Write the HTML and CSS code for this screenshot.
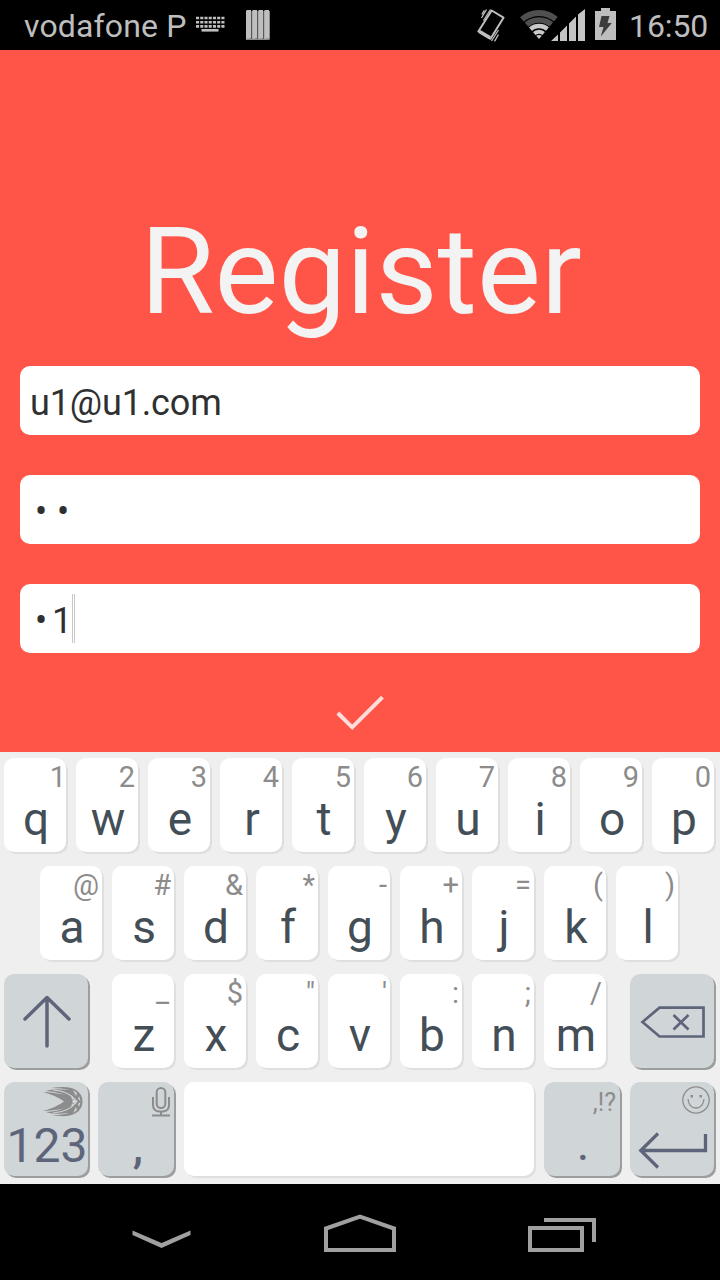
FILE: index.html
```
<!DOCTYPE html>
<html lang="en">
<head>
<meta charset="utf-8">
<title>Register</title>
<link rel="stylesheet" href="styles.css">
</head>
<body>
<div class="screen">
  <header class="status">
    <span class="carrier">vodafone P</span>
    <svg class="status-keyboard" width="30" height="18" viewBox="0 0 30 18">
      <path d="M0 2h28.500M0 6.200h28.500M0 10.400h28.500" stroke="#bebebe" stroke-width="2.600" stroke-dasharray="3.100 1.130" fill="none"/>
      <path d="M5.500 14.300h17" stroke="#bebebe" stroke-width="2.600"/>
    </svg>
    <svg class="status-bars" width="24" height="30" viewBox="0 0 24 30">
      <path fill="#8a8a8a" d="M0 30V1h24v28l-1 1z"/>
      <path fill="#bebebe" d="M0 29V1l1-1h4v28zM6 29V1l1-1h4v28zM12 29V1l1-1h4v28zM18 29V1l1-1h4v28z"/>
      <path stroke="#333" stroke-width=".7" d="M5.700 1v28M11.700 1v28M17.700 1v28"/>
    </svg>
    <svg class="status-icons" width="140" height="34" viewBox="476 8 140 34">
      <g fill="none" stroke="#bebebe" stroke-linejoin="round">
        <path stroke-width="2" d="M491.700 10.500L503.500 17.700L490.500 38.800L478.300 31.500Z"/>
        <path stroke-width="3.500" d="M479.500 31.500L490 37.800"/>
        <path stroke-width="1.300" d="M481.500 18l5-8.500M483.500 20.500l7-11M481.800 14.500l2.500-4.200M498.500 30l-7 11M498.500 34.500l-4 6.800M495.500 31l-2 3"/>
      </g>
      <clipPath id="wedge"><path d="M539 39L519 16Q539 0 558.500 16Z"/></clipPath>
      <g clip-path="url(#wedge)" fill="none">
        <circle cx="539" cy="39" r="26" stroke="#505050" stroke-width="6"/>
        <circle cx="539" cy="39" r="19" stroke="#505050" stroke-width="5.500"/>
        <circle cx="539" cy="39" r="13" stroke="#c8c8c8" stroke-width="4.600"/>
        <circle cx="539" cy="39" r="7.300" stroke="#c8c8c8" stroke-width="4"/>
        <circle cx="539" cy="39" r="4" fill="#c8c8c8"/>
      </g>
      <path fill="#c4c4c4" d="M551 41L558 34.500V41ZM560 41V32.500L567 25.500V41ZM569 41V23.500L576 16.500V41ZM578 41V14.500L585 9V41Z"/>
      <path fill="#bebebe" d="M601 8h9v3h6v29h-21V11h6z"/>
      <path fill="#3c3c3c" d="M601.500 16h8l-2 7h4.300l-11 13.500l2.700-9.500h-4.500z"/>
    </svg>
    <span class="clock">16:50</span>
  </header>

  <main class="form">
    <h1 class="title">Register</h1>
    <div class="field">u1@u1.com</div>
    <div class="field"><span class="bullet">•</span><span class="bullet">•</span></div>
    <div class="field"><span class="bullet">•</span><span class="last">1</span><i class="caret"></i></div>
    <svg class="check" width="50" height="36" viewBox="0 0 50 36"><path d="M2.800 18L17.200 32.300L47.500 2.200" fill="none" stroke="#ffddda" stroke-width="4"/></svg>
  </main>

  <section class="keyboard">
    <div class="row">
      <div class="key one"><small>1</small><b>q</b></div>
      <div class="key"><small>2</small><b>w</b></div>
      <div class="key"><small>3</small><b>e</b></div>
      <div class="key"><small>4</small><b>r</b></div>
      <div class="key"><small>5</small><b>t</b></div>
      <div class="key"><small>6</small><b>y</b></div>
      <div class="key"><small>7</small><b>u</b></div>
      <div class="key"><small>8</small><b>i</b></div>
      <div class="key"><small>9</small><b>o</b></div>
      <div class="key"><small>0</small><b>p</b></div>
    </div>
    <div class="row row-home">
      <div class="key"><small>@</small><b>a</b></div>
      <div class="key"><small>#</small><b>s</b></div>
      <div class="key"><small>&amp;</small><b>d</b></div>
      <div class="key"><small>*</small><b>f</b></div>
      <div class="key"><small>-</small><b>g</b></div>
      <div class="key"><small>+</small><b>h</b></div>
      <div class="key"><small>=</small><b>j</b></div>
      <div class="key"><small>(</small><b>k</b></div>
      <div class="key"><small>)</small><b>l</b></div>
    </div>
    <div class="row">
      <div class="key gray wide shift">
        <svg width="84" height="94" viewBox="0 0 84 94"><path d="M43 72V24M21 45L43 23.500L65 45" fill="none" stroke="#5e657b" stroke-width="3.500" stroke-linecap="round" stroke-linejoin="round"/></svg>
      </div>
      <div class="key underscore"><small>_</small><b>z</b></div>
      <div class="key"><small>$</small><b>x</b></div>
      <div class="key"><small>"</small><b>c</b></div>
      <div class="key"><small>'</small><b>v</b></div>
      <div class="key"><small>:</small><b>b</b></div>
      <div class="key"><small>;</small><b>n</b></div>
      <div class="key slash"><small>/</small><b>m</b></div>
      <div class="key gray wide delete">
        <svg width="84" height="94" viewBox="0 0 84 94"><path d="M12.500 48L29.500 33.700H73.500V62.500H29.500ZM43.500 41L58.500 55.500M58.500 41L43.500 55.500" fill="none" stroke="#5e657b" stroke-width="2.700"/></svg>
      </div>
    </div>
    <div class="row">
      <div class="key gray wide numbers">
        <small><svg width="40" height="31" viewBox="0 0 40 31">
          <path fill="#8c8c8c" d="M8 2Q26 -1 33 4Q39.500 8 39.500 15.500Q39.500 23 33 27Q26 32 8 29Q20 29 26 27Q10 29 3 26Q14 25.500 23 21.500Q17 24 0 25Q13 21.500 21 15.500Q13 9.500 0 6Q17 7 23 9.500Q14 5.500 3 5Q10 2 26 4Q20 2 8 2Z"/>
          <path fill="none" stroke="#d0d5d8" stroke-width="1.100" d="M10 4Q26 5 34 15.500Q26 26 10 27"/>
          <path fill="#d0d5d8" d="M30 4l4 3-1 3zM36 10l1.500 5-2.500-2zM28 9l3 3-2 2zM34 15.500l-2.500-3-2.500 3 2.500 3zM30 27l4-3-1-3zM36 21l1.500-5-2.500 2zM28 22l3-3-2-2z"/>
        </svg></small><b>123</b>
      </div>
      <div class="key gray medium comma">
        <small><svg width="18" height="30" viewBox="0 0 18 30"><g fill="none" stroke="#8c8c8c" stroke-width="2"><rect x="4.700" y="1" width="8.600" height="20" rx="4.300"/><path d="M1 10v8Q1 24 7 24.500h4Q17 24 17 18v-8M9 24.500V28M0 28.500h18"/></g></svg></small><b>,</b>
      </div>
      <div class="key space"></div>
      <div class="key gray medium period"><small>,!?</small><b>.</b></div>
      <div class="key gray wide enter">
        <svg width="84" height="94" viewBox="0 0 84 94"><g fill="none" stroke="#8c8c8c" stroke-width="1.300"><circle cx="66" cy="18" r="13.200"/><path d="M58 17Q59 26 66 26Q73 26 74 17"/></g><path fill="#8c8c8c" d="M60.500 13h2.500v2.500h-2.500zM69.500 13h2.500v2.500h-2.500z"/><path d="M75.500 52V68.500H11M28 51.500L10.800 68.500L28 85.500" fill="none" stroke="#5e657b" stroke-width="3.300"/></svg>
      </div>
    </div>
  </section>

  <nav class="nav">
    <svg width="60" height="40" viewBox="0 0 60 40"><path fill="#a0a0a0" d="M.5 16.500L29.500 29L58.500 16.500V21L29.500 34L.5 21Z"/></svg>
    <svg width="72" height="40" viewBox="0 0 72 40"><path d="M2 14.500L36 2.500L70 14.500V36H2Z" fill="none" stroke="#a0a0a0" stroke-width="4"/></svg>
    <svg width="68" height="40" viewBox="0 0 68 40"><path d="M2 14H54V36H2ZM16 6H66V28" fill="none" stroke="#a0a0a0" stroke-width="4"/></svg>
  </nav>
</div>
</body>
</html>
```
FILE: styles.css
```
* { box-sizing: border-box; }
body { margin: 0; background: #000; font-family: Roboto, "Liberation Sans", sans-serif; }
svg { display: block; flex: none; }
.screen { width: 720px; height: 1280px; display: flex; flex-direction: column; overflow: hidden; }

.status { height: 50px; flex: none; display: flex; align-items: flex-start; padding: 0 0 0 24px; background: #000; color: #bebebe; font-size: 32px; line-height: 52px; white-space: nowrap; }
.carrier { width: 172px; letter-spacing: .15px; }
.status-keyboard { margin-top: 16px; }
.status-bars { margin: 10px 0 0 20px; }
.status-icons { margin: 8px 0 0 206px; }
.clock { margin-left: 13px; letter-spacing: -.1px; }

.form { height: 702px; flex: none; display: flex; flex-direction: column; align-items: center; padding: 166px 20px 0; background: #ff5548; }
.title { margin: 0 0 10px; padding-left: 2px; height: 140px; line-height: 111px; font-size: 120.500px; font-weight: 400; color: #f3f3f3; }
.field { width: 680px; height: 69px; margin-bottom: 40px; padding-left: 10px; flex: none; display: flex; align-items: flex-start; border-radius: 10px; background: #fff; color: #2f3031; font-size: 36px; line-height: 75px; letter-spacing: -.15px; }
.bullet { width: 22px; text-align: center; }
.last { width: 20px; }
.caret { width: 3px; height: 49px; margin-top: 10px; border: solid #c8c8c8; border-width: 0 1px; }
.check { margin-top: 2px; }

.keyboard { height: 432px; flex: none; display: flex; flex-direction: column; gap: 14px; padding: 6px 4px 8px; background: #efefef; }
.row { display: flex; gap: 10px; height: 94px; }
.row-home { padding-left: 36px; }
.key { width: 62px; height: 94px; flex: none; display: flex; flex-direction: column; border-radius: 10px; background: #fff; box-shadow: 2px 2px 0 #dfdfdf; color: #434e57; }
.key small { height: 38px; flex: none; display: flex; justify-content: flex-end; padding-right: 3px; font-size: 29px; line-height: 38px; color: #8c8c8c; }
.key b { font-size: 46px; font-weight: 400; line-height: 47px; text-align: center; padding-left: 2px; }
.key.one small { padding-right: 0; }
.key.underscore small { padding-right: 5px; line-height: 36px; }
.key.slash small { padding-right: 4px; }
.key.gray { background: #d0d5d8; box-shadow: 2px 2px 0 #9c9d9e; color: #5e657b; }
.key.wide { width: 84px; }
.key.medium { width: 76px; }
.key.space { width: 350px; }
.shift { margin-right: 14px; }
.delete { margin-left: 14px; }
.key.numbers small { padding: 4px 5px 0 0; }
.key.numbers b { font-size: 48px; line-height: 51px; }
.key.comma small { padding: 5px 4px 0 0; }
.key.comma b { font-size: 46px; font-weight: 500; line-height: 53px; padding-left: 4px; }
.key.period b { font-size: 48px; line-height: 47px; }
.key.period small { font-size: 25px; line-height: 42px; padding-right: 4px; }

.nav { height: 96px; flex: none; display: flex; justify-content: space-between; padding: 30px 124px 0 132px; background: #000; }
```
